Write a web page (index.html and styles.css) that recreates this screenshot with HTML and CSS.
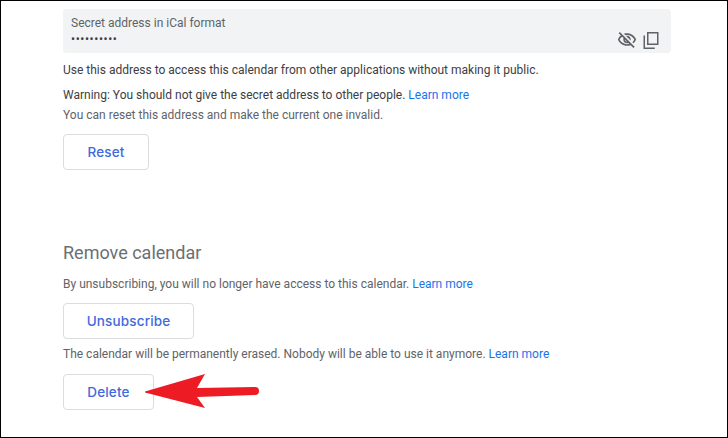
FILE: index.html
```html
<!DOCTYPE html>
<html lang="en">

<head>
    <meta charset="UTF-8">
    <title>Calendar settings</title>
    <link rel="stylesheet" href="styles.css">
</head>

<body>
    <div class="frame">
        <div class="content">
            <div class="secret-box">
                <div class="secret-label">Secret address in iCal format</div>
                <div class="secret-value">••••••••••</div>
                <div class="secret-icons">
                    <svg class="icon" width="20" height="20" viewBox="0 0 24 24" fill="#5f6368">
                        <path d="M12 6c3.790 0 7.170 2.130 8.820 5.500-.59 1.220-1.420 2.270-2.410 3.120l1.410 1.410c1.390-1.230 2.490-2.770 3.180-4.530C21.270 7.110 17 4 12 4c-1.270 0-2.490.2-3.640.57l1.650 1.650C10.660 6.090 11.320 6 12 6zm-1.070 1.140L13 9.210c.57.25 1.030.71 1.280 1.280l2.070 2.070c.08-.34.14-.7.14-1.070C16.500 9.010 14.480 7 12 7c-.37 0-.72.05-1.070.14zM2.010 3.870l2.680 2.680C3.060 7.830 1.770 9.530 1 11.500 2.730 15.890 7 19 12 19c1.520 0 2.980-.29 4.320-.82l3.420 3.420 1.410-1.410L3.420 2.450 2.010 3.870zm7.500 7.500l2.610 2.610c-.04.01-.08.02-.12.02-1.380 0-2.500-1.120-2.500-2.500 0-.05.01-.08.01-.13zm-3.400-3.400l1.750 1.750c-.23.55-.36 1.150-.36 1.780 0 2.480 2.020 4.500 4.500 4.500.63 0 1.230-.13 1.770-.36l.98.98c-.88.24-1.800.38-2.750.38-3.790 0-7.170-2.130-8.820-5.500.7-1.430 1.720-2.610 2.930-3.530z"/>
                    </svg>
                    <svg class="icon" width="20" height="20" viewBox="0 0 20 20" fill="none" stroke="#5f6368" stroke-width="1.500">
                        <path d="M6.750 2.750h10v11.500h-10z"/>
                        <path d="M3.250 5.500v12.750h10.500"/>
                    </svg>
                </div>
            </div>

            <p class="note first">Use this address to access this calendar from other applications without making it public.</p>
            <p class="note warn">Warning: You should not give the secret address to other people. <a href="#">Learn more</a></p>
            <p class="note muted">You can reset this address and make the current one invalid.</p>
            <button class="btn reset">Reset</button>

            <h2>Remove calendar</h2>
            <p class="note muted">By unsubscribing, you will no longer have access to this calendar. <a href="#">Learn more</a></p>
            <button class="btn unsub">Unsubscribe</button>
            <p class="note muted erased">The calendar will be permanently erased. Nobody will be able to use it anymore. <a href="#">Learn more</a></p>
            <button class="btn delete">Delete</button>
        </div>

        <svg class="arrow" width="120" height="40" viewBox="0 0 120 40">
            <path d="M0 19.500 L60 2 L52 16 L110 15 A4 4 0 0 1 110 23 L52 25 L60 36 L0 20.500 Z" fill="#ed1c24"/>
        </svg>
    </div>
</body>

</html>
```

FILE: styles.css
```css
* {
    margin: 0;
    padding: 0;
    box-sizing: border-box;
}

body {
    font-family: Roboto, "Liberation Sans", sans-serif;
    background-color: #fff;
    color: #3c4043;
    overflow: hidden;
}

.frame {
    position: relative;
    width: 728px;
    height: 438px;
    border: 1px solid #000;
    overflow: hidden;
}

.content {
    padding: 8px 56px 0 62px;
}

.secret-box {
    position: relative;
    height: 44px;
    padding: 6px 8px;
    background-color: #f1f3f4;
    border-radius: 4px;
}

.secret-label {
    font-size: 12px;
    line-height: 16px;
    color: #5f6368;
}

.secret-value {
    font-size: 12px;
    line-height: 14px;
    letter-spacing: 0.6px;
    color: #3c4043;
    padding-top: 1px;
}

.secret-icons {
    position: absolute;
    right: 10px;
    bottom: 3px;
    display: flex;
    gap: 4px;
}

.icon {
    display: block;
}

.note {
    font-size: 12px;
    line-height: 16px;
}

.note a {
    color: #1a73e8;
    text-decoration: none;
}

.muted {
    color: #5f6368;
    margin-top: 4px;
}

.first {
    margin-top: 9px;
}

.warn {
    margin-top: 9px;
}

.btn {
    display: block;
    height: 36px;
    background-color: #fff;
    border: 1px solid #dadce0;
    border-radius: 4px;
    font-family: Inter, Roboto, sans-serif;
    font-size: 13.5px;
    font-weight: 500;
    letter-spacing: 0.15px;
    color: #4169dd;
}

.reset {
    width: 86px;
    margin-top: 11px;
}

.unsub {
    width: 131px;
    margin-top: 11px;
}

.delete {
    width: 91px;
    margin-top: 12px;
}

h2 {
    font-size: 18px;
    line-height: 24px;
    font-weight: 400;
    color: #6b6f73;
    margin-top: 71px;
    margin-bottom: 11px;
}

.erased {
    margin-top: 7px;
}

.arrow {
    position: absolute;
    left: 144px;
    top: 371px;
}
```
